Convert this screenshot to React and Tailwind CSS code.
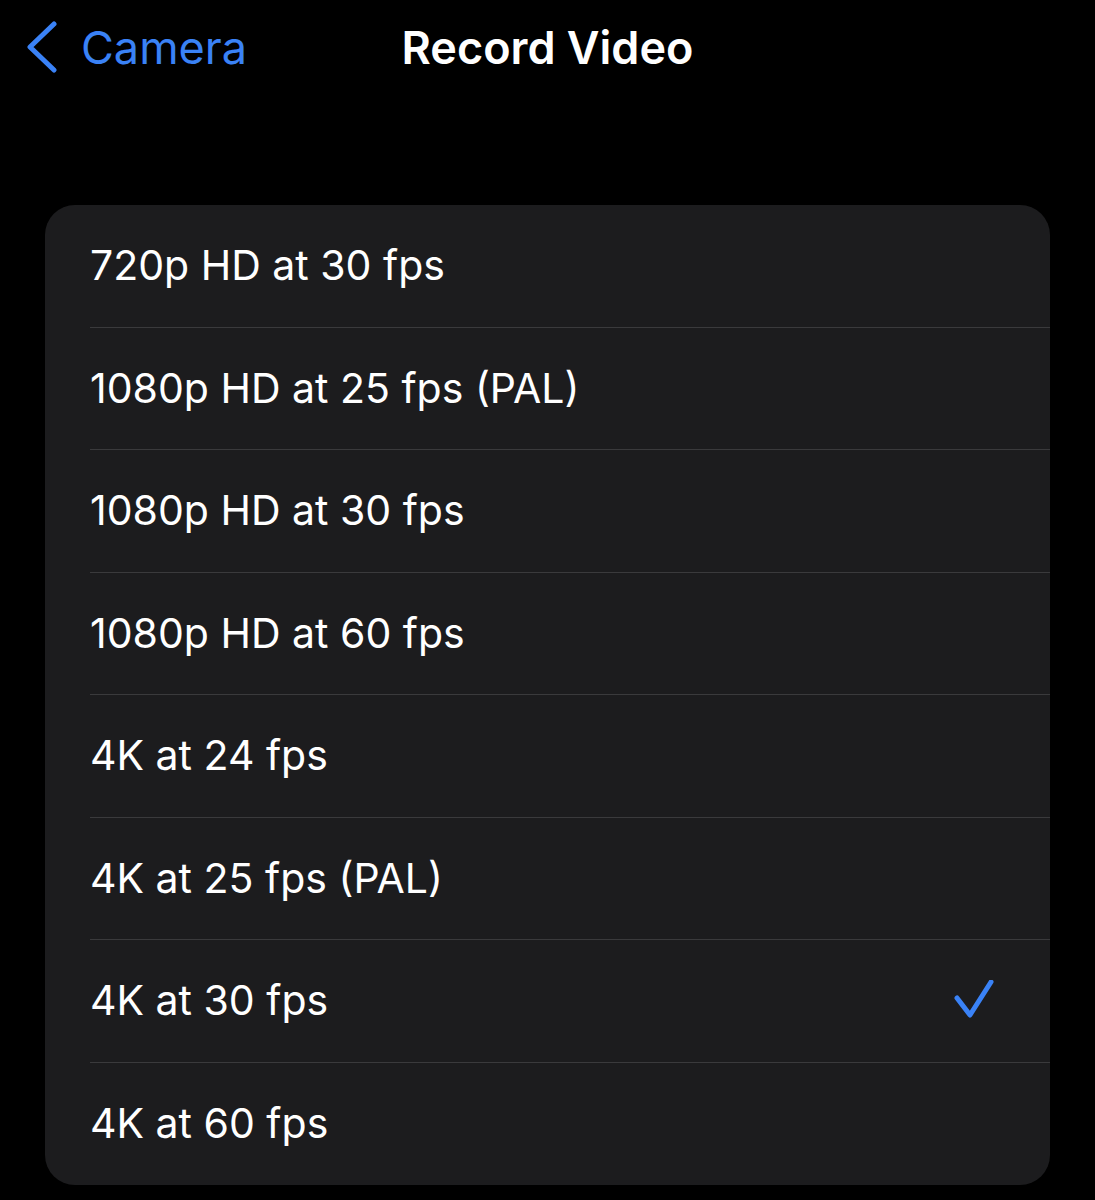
const modes = [
  "720p HD at 30 fps",
  "1080p HD at 25 fps (PAL)",
  "1080p HD at 30 fps",
  "1080p HD at 60 fps",
  "4K at 24 fps",
  "4K at 25 fps (PAL)",
  "4K at 30 fps",
  "4K at 60 fps",
];

function App() {
  const selected = "4K at 30 fps";

  return (
    <div
      className="min-h-[1200px] bg-black text-white"
      style={{ fontFamily: "Inter, 'Noto Sans', sans-serif" }}
    >
      <div className="grid h-[94px] grid-cols-[1fr_auto_1fr] items-center">
        <button className="flex items-center gap-[21px] pl-[26px] text-[#3a82f6]">
          <svg width="34" height="52" viewBox="0 0 34 52" fill="none">
            <polyline
              points="28,3 4,26 28,49"
              stroke="currentColor"
              strokeWidth="5"
              strokeLinecap="round"
              strokeLinejoin="round"
            />
          </svg>
          <span className="text-[45px] leading-none">Camera</span>
        </button>
        <h1 className="text-[45px] font-semibold leading-none">Record Video</h1>
        <div />
      </div>

      <div className="mx-[45px] mt-[111px] overflow-hidden rounded-[30px] bg-[#1c1c1e]">
        {modes.map((mode, i) => (
          <div key={mode} className="flex h-[122.5px] pl-[45px]">
            <div
              className={
                "flex flex-1 items-center justify-between pr-[54px] " +
                (i < modes.length - 1 ? "border-b border-[#3a3a3c]" : "")
              }
            >
              <span className="text-[41px] leading-none">{mode}</span>
              {mode === selected && (
                <svg width="42" height="42" viewBox="0 0 42 42" fill="none">
                  <polyline
                    points="3,18 16,35 37,2"
                    stroke="#3a82f6"
                    strokeWidth="5"
                    strokeLinecap="round"
                    strokeLinejoin="round"
                  />
                </svg>
              )}
            </div>
          </div>
        ))}
      </div>
    </div>
  );
}

export default App;
